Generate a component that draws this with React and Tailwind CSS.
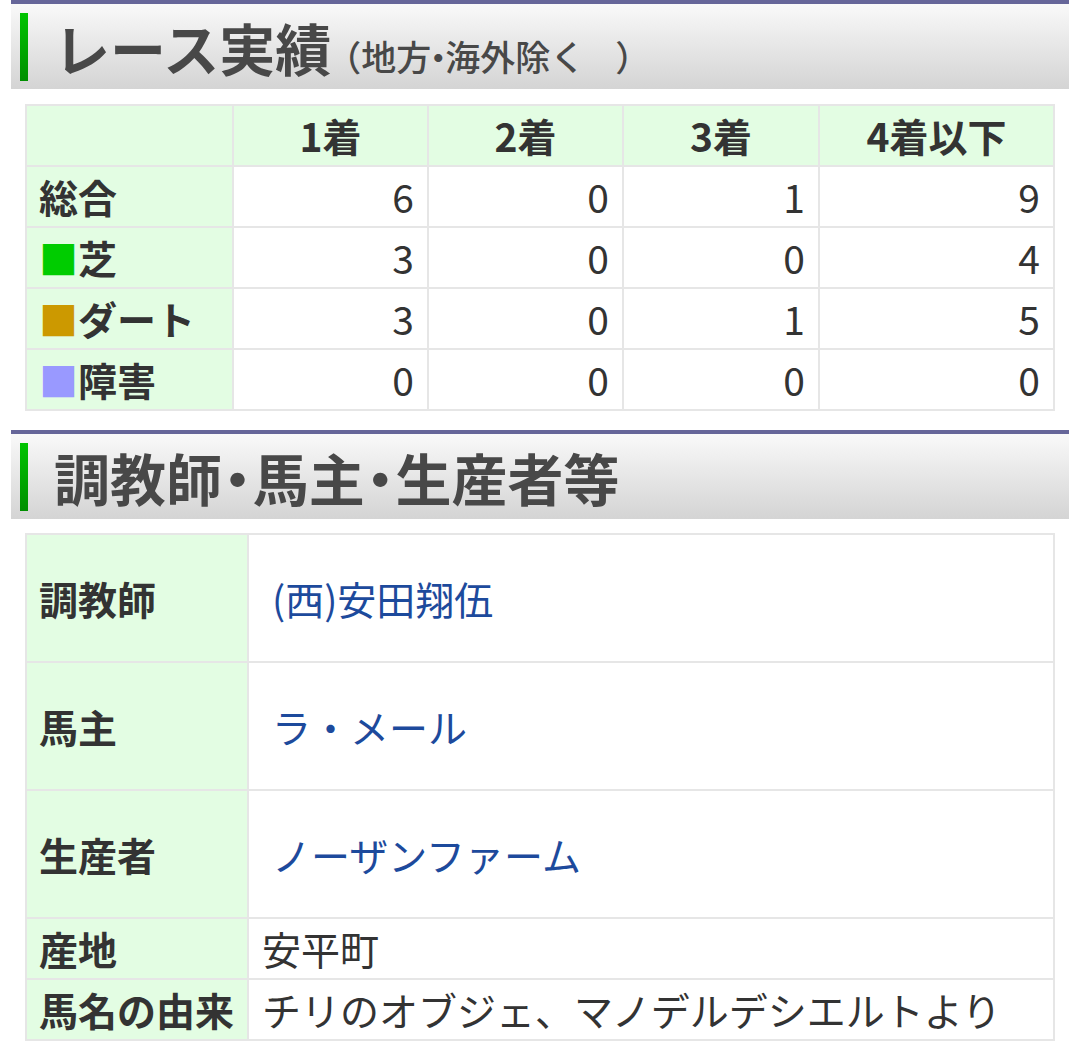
const FONT = { fontFamily: '"Noto Sans CJK JP", "Noto Sans", sans-serif' };

const results = [
  { label: "総合", mark: null, v: [6, 0, 1, 9] },
  { label: "芝", mark: "text-[#00cc00]", v: [3, 0, 0, 4] },
  { label: "ダート", mark: "text-[#cc9900]", v: [3, 0, 1, 5] },
  { label: "障害", mark: "text-[#9999ff]", v: [0, 0, 0, 0] },
];

const people = [
  { label: "調教師", value: "(西)安田翔伍", link: true, tall: true },
  { label: "馬主", value: "ラ・メール", link: true, tall: true },
  { label: "生産者", value: "ノーザンファーム", link: true, tall: true },
  { label: "産地", value: "安平町" },
  { label: "馬名の由来", value: "チリのオブジェ、マノデルデシエルトより" },
];

// heading dots are narrower than a full em in the original
function Dots({ text, dot = "w-[0.55em]" }) {
  return text.split("・").map((part, i) => (
    <span key={i}>
      {i > 0 && <span className={`inline-flex ${dot} justify-center`}>・</span>}
      {part}
    </span>
  ));
}

function SectionHeader({ title, sub }) {
  return (
    <div className="mx-[11px] border-t-[4px] border-[#666699] bg-gradient-to-b from-[#f9f9f9] to-[#d4d4d4] h-[89px] flex items-center pl-[9px]">
      <div className="w-[8px] h-[68px] bg-gradient-to-b from-[#00c400] to-[#008f00]" />
      <h2 className="ml-[26px] text-[56px] font-bold text-[#484848] leading-none whitespace-nowrap">
        <Dots text={title} />
        {sub && (
          <span className="text-[35px] font-medium">
            <span className="inline-flex w-[30px] justify-end">（</span>
            <Dots text={sub} dot="w-[14px]" />
            <span className="inline-flex w-[35px] ml-[30px] justify-start">）</span>
          </span>
        )}
      </h2>
    </div>
  );
}

export default function App() {
  return (
    <div className="w-[1080px] h-[1047px] bg-white overflow-hidden text-[#333]" style={FONT}>
      <SectionHeader title="レース実績" sub="地方・海外除く" />

      <div className="px-[25px] pt-[15px]">
        <table className="w-[1030px] border-collapse text-[39px] leading-none">
          <colgroup>
            <col className="w-[207px]" />
            <col className="w-[195px]" />
            <col className="w-[195px]" />
            <col className="w-[196px]" />
            <col />
          </colgroup>
          <thead>
            <tr className="h-[61px] bg-[#e3fde3]">
              <th className="border-2 border-[#e6e6e6]" />
              {["1着", "2着", "3着", "4着以下"].map((h) => (
                <th key={h} className="border-2 border-[#e6e6e6] font-bold text-center">
                  {h}
                </th>
              ))}
            </tr>
          </thead>
          <tbody>
            {results.map((r) => (
              <tr key={r.label} className="h-[61px]">
                <td className="border-2 border-[#e6e6e6] bg-[#e3fde3] font-bold pl-[12px] whitespace-nowrap">
                  {r.mark && <span className={`${r.mark} font-normal`}>■</span>}
                  {r.label}
                </td>
                {r.v.map((n, i) => (
                  <td key={i} className="border-2 border-[#e6e6e6] text-right pr-[13px]">
                    {n}
                  </td>
                ))}
              </tr>
            ))}
          </tbody>
        </table>
      </div>

      <div className="pt-[19px]">
        <SectionHeader title="調教師・馬主・生産者等" />
      </div>

      <div className="px-[25px] pt-[14px]">
        <table className="w-[1030px] border-collapse text-[39px] leading-none">
          <colgroup>
            <col className="w-[222px]" />
            <col />
          </colgroup>
          <tbody>
            {people.map((p) => (
              <tr key={p.label} className={p.tall ? "h-[128px]" : "h-[61px]"}>
                <td className="border-2 border-[#e6e6e6] bg-[#e3fde3] font-bold pl-[12px] whitespace-nowrap">
                  {p.label}
                </td>
                <td className="border-2 border-[#e6e6e6] pl-[13px] whitespace-nowrap">
                  {p.link ? (
                    <a href="#" className="ml-[10px] text-[#1d4a9c]">
                      {p.value}
                    </a>
                  ) : (
                    p.value
                  )}
                </td>
              </tr>
            ))}
          </tbody>
        </table>
      </div>
    </div>
  );
}
